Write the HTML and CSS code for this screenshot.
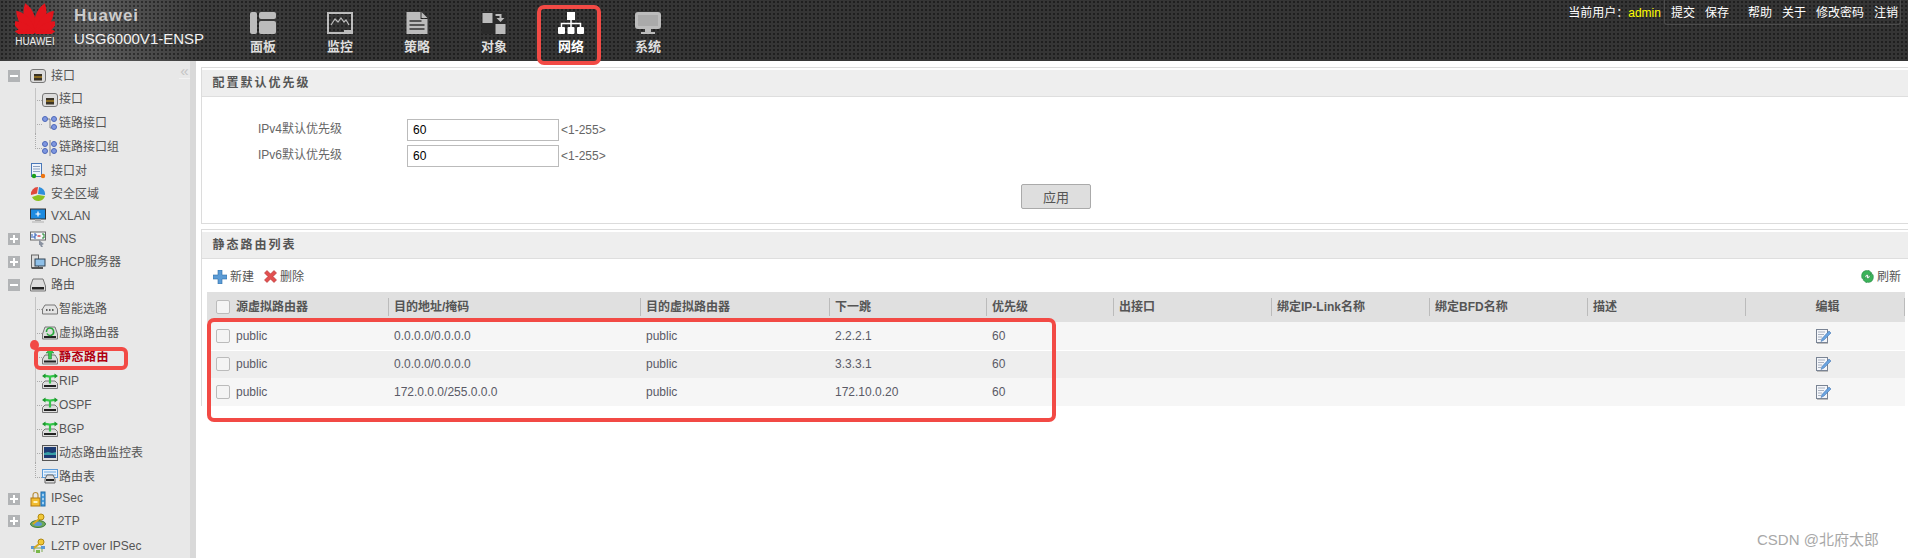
FILE: index.html
```html
<!DOCTYPE html>
<html lang="zh">
<head>
<meta charset="utf-8">
<title>USG6000V1-ENSP</title>
<link rel="stylesheet" href="styles.css">
</head>
<body>
<svg class="sprite" aria-hidden="true">
  <symbol id="petal" viewBox="-10 -32 20 32"><path d="M0 0C-9-7-10.500-20-4-31C4-24 5-9 0 0Z"/></symbol>
  <symbol id="n-panel" viewBox="0 0 26 22"><rect width="7" height="22" rx="2"/><rect x="9" width="17" height="7" rx="2"/><rect x="9" y="9" width="17" height="13" rx="2"/></symbol>
  <symbol id="n-monitor" viewBox="0 0 26 22"><path d="M0 0H26V22H0ZM2 2V20H17V18H24V2Z" fill-rule="evenodd"/><path d="M4 13L8 7 11 10 14 6 17 10 19 8 22 13" fill="none" stroke="currentColor" stroke-width="1.2"/></symbol>
  <symbol id="n-policy" viewBox="0 0 21 22"><path d="M0 0H14V7H21V22H0ZM15 0L21 6H15Z" fill-rule="evenodd"/><path d="M3 9H15M3 13H18M3 17H18" stroke="#333" stroke-width="1.6"/></symbol>
  <symbol id="n-object" viewBox="0 0 25 22"><rect width="25" height="22" fill="#2b2b2b"/><rect x="1" y="1" width="10" height="10"/><rect x="14" y="12" width="10" height="10"/><path d="M14 2H20V6H23L19 10 15 6H18V4H14Z"/></symbol>
  <symbol id="n-network" viewBox="0 0 26 22"><rect x="9" width="8" height="8"/><rect y="15" width="7" height="7" rx="1"/><rect x="9.500" y="15" width="7" height="7" rx="1"/><rect x="19" y="15" width="7" height="7" rx="1"/><path d="M13 8V15M3.500 15V11.500H22.500V15" fill="none" stroke="currentColor" stroke-width="1.500"/></symbol>
  <symbol id="n-system" viewBox="0 0 26 22"><rect width="26" height="17" rx="3"/><rect x="3" y="3" width="20" height="11" fill="#aaa"/><rect x="10" y="17" width="6" height="3"/><rect x="6" y="20" width="14" height="2"/></symbol>

  <symbol id="i-port" viewBox="0 0 16 16"><rect x=".5" y="1.500" width="15" height="13" rx="2.500" fill="#dcdcdc" stroke="#777"/><rect x="4" y="6" width="8" height="6.500" fill="#3a3326"/><path d="M5 8V10M7 8V10M9 8V10M11 8V10" stroke="#d9a520"/></symbol>
  <symbol id="i-link" viewBox="0 0 16 16"><path d="M4 3H8V12H12" fill="none" stroke="#888"/><circle cx="3" cy="3" r="2.500" fill="#7f97e0" stroke="#4d68b8"/><circle cx="12" cy="3" r="2.500" fill="#7f97e0" stroke="#4d68b8"/><circle cx="12" cy="11" r="2.500" fill="#7f97e0" stroke="#4d68b8"/></symbol>
  <symbol id="i-linkgroup" viewBox="0 0 16 16"><path d="M8 0V16" stroke="#888"/><circle cx="3" cy="4" r="2.500" fill="#7f97e0" stroke="#4d68b8"/><circle cx="12" cy="4" r="2.500" fill="#7f97e0" stroke="#4d68b8"/><circle cx="3" cy="11" r="2.500" fill="#7f97e0" stroke="#4d68b8"/><circle cx="12" cy="11" r="2.500" fill="#7f97e0" stroke="#4d68b8"/></symbol>
  <symbol id="i-pair" viewBox="0 0 16 16"><rect x="1.500" y=".5" width="10" height="13" fill="#eef3fb" stroke="#4a78b8"/><path d="M3 3.500H10M3 6H10M3 8.500H10" stroke="#8aa0c0"/><circle cx="4" cy="13" r="2.200" fill="#1aa01a"/><circle cx="13" cy="13" r="2.200" fill="#ee7410"/></symbol>
  <symbol id="i-zone" viewBox="0 0 16 16"><path d="M8 8L9 1A7 7 0 0 1 15 9Z" fill="#2f8fdc"/><path d="M7 7.500L8 1A7 7 0 0 0 1 9Z" fill="#e0483c"/><path d="M8 9L15 10A7 7 0 0 1 2 11Z" fill="#8cc21f"/></symbol>
  <symbol id="i-vxlan" viewBox="0 0 16 16"><rect x=".5" y="1" width="15" height="10" fill="#1d8be0" stroke="#333"/><path d="M8 3.500V8.500M5.500 6H10.500" stroke="#fff" stroke-width="1.200"/><rect x="5" y="11" width="6" height="2" fill="#aaa"/><rect x="2" y="13" width="12" height="2" fill="#ccc"/></symbol>
  <symbol id="i-dns" viewBox="0 0 16 16"><rect x=".5" y="1" width="15" height="8" fill="#f4f6fa" stroke="#666"/><path d="M2 3V7M4 3H6V5H4V7H6" stroke="#2b5bb8" fill="none"/><path d="M7.500 5H10.500" stroke="#c22" stroke-width="1.200"/><path d="M12 3H14V7H12" stroke="#1a8a2a" fill="none"/><path d="M9 9L14 13 12 14 13 16H11L10 14 9 14Z" fill="#8a92a0"/></symbol>
  <symbol id="i-dhcp" viewBox="0 0 16 16"><rect x="1.500" y="1" width="7" height="13" fill="#ddd" stroke="#666"/><rect x="5" y="5" width="10" height="7" fill="#8fc0e8" stroke="#345"/><rect x="2" y="13" width="11" height="2" fill="#555"/></symbol>
  <symbol id="i-route" viewBox="0 0 16 16"><path d="M3 2H13L15.500 9V14H.5V9Z" fill="#ddd" stroke="#777"/><rect x="2" y="10" width="12" height="2.500" fill="#222"/></symbol>
  <symbol id="i-smart" viewBox="0 0 16 16"><path d="M3 4H13L15.500 8V13H.5V8Z" fill="#e4e4e4" stroke="#777"/><path d="M4 9H5.500M7 9H8.500M10 9H11.500" stroke="#333" stroke-width="1.600"/></symbol>
  <symbol id="i-vr" viewBox="0 0 16 16"><path d="M3 2H13L15.500 9V14H.5V9Z" fill="#ddd" stroke="#777"/><rect x="2" y="11" width="12" height="2" fill="#222"/><path d="M4.500 7A3.500 3.500 0 0 1 11.500 6M11.500 6A3.500 3.500 0 0 1 5 8.500" fill="none" stroke="#2aa83c" stroke-width="1.600"/></symbol>
  <symbol id="i-static" viewBox="0 0 16 16"><path d="M3 6H13L15.500 10V15H.5V10Z" fill="#ddd" stroke="#777"/><rect x="2" y="11.500" width="12" height="2" fill="#222"/><path d="M8 0L12 4H9.500V10H6.500V4H4Z" fill="#35c54a" stroke="#1c7a2a" stroke-width=".5"/></symbol>
  <symbol id="i-dyn" viewBox="0 0 16 16"><path d="M3 8H13L15.500 10.500V15.500H.5V10.500Z" fill="#ddd" stroke="#777"/><rect x="2" y="12" width="12" height="2" fill="#222"/><path d="M8 10.500V3M8 3.500C5 3.500 4 2.500 2 3M8 3.500C11 3.500 12 2.500 14 3" fill="none" stroke="#35c54a" stroke-width="2.200"/><path d="M0 3L3.500 .5V5.500ZM16 3L12.500 .5V5.500Z" fill="#1c9a2e"/></symbol>
  <symbol id="i-mon" viewBox="0 0 16 16"><rect x=".5" y=".5" width="15" height="15" fill="#ddd" stroke="#555"/><rect x="2" y="2" width="12" height="11" fill="#1c3a72"/><path d="M2 8L6 7 10 8 14 7V10H2Z" fill="#38a0a8"/></symbol>
  <symbol id="i-table" viewBox="0 0 16 16"><rect x=".5" y=".5" width="15" height="8" fill="#e8f2fc" stroke="#5a9ad8"/><path d="M2 3H14M2 6H14" stroke="#6aa8e0"/><path d="M5 6H11L13 10V14H3V10Z" fill="#ddd" stroke="#666"/><rect x="4" y="10" width="8" height="2" fill="#222"/></symbol>
  <symbol id="i-ipsec" viewBox="0 0 16 16"><path d="M3 7V4A2.500 2.500 0 0 1 8 4V7" fill="none" stroke="#b89040" stroke-width="1.200"/><rect x="1" y="7" width="9" height="8" fill="#f2bc30" stroke="#b07810"/><rect x="3.500" y="10" width="4" height="2" fill="#fff3c0"/><rect x="11" y="1" width="4" height="14" fill="#4aa0e0" stroke="#1e6aa8"/><path d="M13 3V5M13 7V9M13 11V13" stroke="#fff"/></symbol>
  <symbol id="i-l2tp" viewBox="0 0 16 16"><ellipse cx="8" cy="11" rx="7.500" ry="3.500" fill="#6fa85a" stroke="#3a7a40"/><ellipse cx="8" cy="11" rx="4" ry="2" fill="#5a98d8"/><circle cx="11" cy="4" r="3" fill="#f2c838" stroke="#b08810"/><path d="M9 6L3 11" stroke="#d8a820" stroke-width="2"/></symbol>
  <symbol id="i-l2tpo" viewBox="0 0 16 16"><path d="M2 10H14M4 10V14M12 10V14" stroke="#7aa84a"/><rect x="1" y="8" width="4" height="3" fill="#5a98d8"/><rect x="11" y="8" width="4" height="3" fill="#5a98d8"/><rect x="6" y="12" width="4" height="3" fill="#7ab84a"/><circle cx="11" cy="4" r="3" fill="#f2c838" stroke="#b08810"/><path d="M9 6L4 10" stroke="#d8a820" stroke-width="2"/></symbol>

  <symbol id="t-plus" viewBox="0 0 14 14"><path d="M5 0H9V5H14V9H9V14H5V9H0V5H5Z" fill="#5b9bd5" stroke="#2f6ea8" stroke-width=".6"/></symbol>
  <symbol id="t-del" viewBox="0 0 13 13"><path d="M.5 3L3 .5 6.500 4 10 .5 12.500 3 9 6.500 12.500 10 10 12.500 6.500 9 3 12.500 .5 10 4 6.500Z" fill="#e25050" stroke="#b03030" stroke-width=".6"/></symbol>
  <symbol id="t-refresh" viewBox="0 0 14 14"><path d="M1 9C-.5 3 3.500-.5 8 1V0L12 3.500 8 7V5C5 4.500 4 6.500 4 10Z" fill="#3cb35a" stroke="#1c7a3a" stroke-width=".5"/><path d="M13 5C14.500 11 10.500 14.500 6 13V14L2 10.500 6 7V9C9 9.500 10 7.500 10 4Z" fill="#3cb35a" stroke="#1c7a3a" stroke-width=".5"/></symbol>
  <symbol id="t-edit" viewBox="0 0 15 15"><rect x=".5" y=".5" width="11" height="13" fill="#f4f6fa" stroke="#7a8494"/><path d="M2 3H9M2 5.500H8M2 8H6M2 10.500H5" stroke="#aab2c0"/><path d="M13 2L15 4 8 11 5 12.500 6 9.500Z" fill="#6aa4e0" stroke="#3a6aa8" stroke-width=".5"/><path d="M1 14.500H12" stroke="#bbb"/></symbol>
</svg>

<div class="app">
  <header class="header">
    <div class="brand">
      <svg class="flower" viewBox="-20 -31 40 32" aria-hidden="true">
        <use href="#petal" x="-10" y="-32" width="20" height="32" transform="rotate(-11)"/>
        <use href="#petal" x="-10" y="-32" width="20" height="32" transform="rotate(11) scale(-1 1)"/>
        <use href="#petal" x="-10" y="-32" width="20" height="32" transform="rotate(-33) scale(.93)"/>
        <use href="#petal" x="-10" y="-32" width="20" height="32" transform="rotate(33) scale(-.93 .93)"/>
        <use href="#petal" x="-10" y="-32" width="20" height="32" transform="rotate(-56) scale(.8)"/>
        <use href="#petal" x="-10" y="-32" width="20" height="32" transform="rotate(56) scale(-.8 .8)"/>
        <use href="#petal" x="-10" y="-32" width="20" height="32" transform="rotate(-78) scale(.65)"/>
        <use href="#petal" x="-10" y="-32" width="20" height="32" transform="rotate(78) scale(-.65 .65)"/>
      </svg>
      <span class="brand-word">HUAWEI</span>
    </div>
    <div class="device">
      <div class="device-vendor">Huawei</div>
      <div class="device-model">USG6000V1-ENSP</div>
    </div>
    <nav class="nav">
      <a class="nav-item"><svg class="nav-icon"><use href="#n-panel"/></svg><span>面板</span></a>
      <a class="nav-item"><svg class="nav-icon"><use href="#n-monitor"/></svg><span>监控</span></a>
      <a class="nav-item"><svg class="nav-icon"><use href="#n-policy"/></svg><span>策略</span></a>
      <a class="nav-item"><svg class="nav-icon"><use href="#n-object"/></svg><span>对象</span></a>
      <a class="nav-item nav-item-active"><svg class="nav-icon"><use href="#n-network"/></svg><span>网络</span></a>
      <a class="nav-item"><svg class="nav-icon"><use href="#n-system"/></svg><span>系统</span></a>
    </nav>
    <div class="account">
      <span class="account-user">当前用户：<b class="account-name">admin</b></span>
      <div class="account-links">
        <a>提交</a><a>保存</a><a class="link-gap">帮助</a><a>关于</a><a>修改密码</a><a>注销</a>
      </div>
    </div>
  </header>

  <div class="workspace">
    <aside class="sidebar">
      <span class="collapse">«</span>
      <div class="row"><span class="exp minus"></span><svg class="ico"><use href="#i-port"/></svg><span>接口</span></div>
      <div class="kids">
        <div class="kid"><svg class="ico"><use href="#i-port"/></svg><span>接口</span></div>
        <div class="kid"><svg class="ico"><use href="#i-link"/></svg><span>链路接口</span></div>
        <div class="kid"><svg class="ico"><use href="#i-linkgroup"/></svg><span>链路接口组</span></div>
      </div>
      <div class="row"><span class="exp blank"></span><svg class="ico"><use href="#i-pair"/></svg><span>接口对</span></div>
      <div class="row"><span class="exp blank"></span><svg class="ico"><use href="#i-zone"/></svg><span>安全区域</span></div>
      <div class="row"><span class="exp blank"></span><svg class="ico"><use href="#i-vxlan"/></svg><span>VXLAN</span></div>
      <div class="row"><span class="exp plus"></span><svg class="ico"><use href="#i-dns"/></svg><span>DNS</span></div>
      <div class="row"><span class="exp plus"></span><svg class="ico"><use href="#i-dhcp"/></svg><span>DHCP服务器</span></div>
      <div class="row"><span class="exp minus"></span><svg class="ico"><use href="#i-route"/></svg><span>路由</span></div>
      <div class="kids kids-route">
        <div class="kid"><svg class="ico"><use href="#i-smart"/></svg><span>智能选路</span></div>
        <div class="kid"><svg class="ico"><use href="#i-vr"/></svg><span>虚拟路由器</span></div>
        <div class="kid kid-selected"><svg class="ico"><use href="#i-static"/></svg><span>静态路由</span></div>
        <div class="kid"><svg class="ico"><use href="#i-dyn"/></svg><span>RIP</span></div>
        <div class="kid"><svg class="ico"><use href="#i-dyn"/></svg><span>OSPF</span></div>
        <div class="kid"><svg class="ico"><use href="#i-dyn"/></svg><span>BGP</span></div>
        <div class="kid"><svg class="ico"><use href="#i-mon"/></svg><span>动态路由监控表</span></div>
        <div class="kid"><svg class="ico"><use href="#i-table"/></svg><span>路由表</span></div>
      </div>
      <div class="row"><span class="exp plus"></span><svg class="ico"><use href="#i-ipsec"/></svg><span>IPSec</span></div>
      <div class="row"><span class="exp plus"></span><svg class="ico"><use href="#i-l2tp"/></svg><span>L2TP</span></div>
      <div class="row row-last"><span class="exp blank"></span><svg class="ico"><use href="#i-l2tpo"/></svg><span>L2TP over IPSec</span></div>
    </aside>

    <main class="main">
      <section class="panel">
        <h2 class="panel-title">配置默认优先级</h2>
        <div class="form">
          <label class="form-label">IPv4默认优先级</label>
          <input class="form-input" value="60">
          <span class="form-hint">&lt;1-255&gt;</span>
          <label class="form-label">IPv6默认优先级</label>
          <input class="form-input" value="60">
          <span class="form-hint">&lt;1-255&gt;</span>
        </div>
        <div class="form-actions"><button class="apply">应用</button></div>
      </section>

      <section class="panel panel-list">
        <h2 class="panel-title">静态路由列表</h2>
        <div class="toolbar">
          <a class="tool"><svg class="tool-plus"><use href="#t-plus"/></svg>新建</a>
          <a class="tool tool-del"><svg class="tool-x"><use href="#t-del"/></svg>删除</a>
          <a class="tool tool-refresh"><svg class="tool-x"><use href="#t-refresh"/></svg>刷新</a>
        </div>
        <table class="routes">
          <colgroup>
            <col class="c-src"><col class="c-dst"><col class="c-vr"><col class="c-hop"><col class="c-pri">
            <col class="c-std"><col class="c-std"><col class="c-std"><col class="c-std"><col class="c-end">
          </colgroup>
          <thead>
            <tr>
              <th><div class="th-in th-check"><input type="checkbox" class="check">源虚拟路由器</div></th>
              <th><div class="th-in">目的地址/掩码</div></th>
              <th><div class="th-in">目的虚拟路由器</div></th>
              <th><div class="th-in">下一跳</div></th>
              <th><div class="th-in">优先级</div></th>
              <th><div class="th-in">出接口</div></th>
              <th><div class="th-in">绑定IP-Link名称</div></th>
              <th><div class="th-in">绑定BFD名称</div></th>
              <th><div class="th-in">描述</div></th>
              <th><div class="th-in th-center">编辑</div></th>
            </tr>
          </thead>
          <tbody>
            <tr>
              <td class="td-check"><input type="checkbox" class="check">public</td><td>0.0.0.0/0.0.0.0</td><td>public</td><td>2.2.2.1</td><td>60</td><td></td><td></td><td></td><td></td>
              <td class="td-edit"><svg class="edit"><use href="#t-edit"/></svg></td>
            </tr>
            <tr>
              <td class="td-check"><input type="checkbox" class="check">public</td><td>0.0.0.0/0.0.0.0</td><td>public</td><td>3.3.3.1</td><td>60</td><td></td><td></td><td></td><td></td>
              <td class="td-edit"><svg class="edit"><use href="#t-edit"/></svg></td>
            </tr>
            <tr>
              <td class="td-check"><input type="checkbox" class="check">public</td><td>172.0.0.0/255.0.0.0</td><td>public</td><td>172.10.0.20</td><td>60</td><td></td><td></td><td></td><td></td>
              <td class="td-edit"><svg class="edit"><use href="#t-edit"/></svg></td>
            </tr>
          </tbody>
        </table>
      </section>
    </main>
  </div>

  <div class="mark mark-nav"></div>
  <div class="mark mark-route"></div>
  <div class="mark-dot"></div>
  <div class="mark mark-table"></div>
  <div class="watermark">CSDN @北府太郎</div>
</div>
</body>
</html>
```

FILE: styles.css
```css
* { box-sizing: border-box; }

html, body {
  margin: 0;
  height: 100%;
}

body {
  background: #fff;
  color: #555;
  font: 12px/1.2 "Liberation Sans", "Noto Sans CJK SC", sans-serif;
  overflow: hidden;
}

.sprite {
  position: absolute;
  width: 0;
  height: 0;
}

.app {
  position: relative;
  width: 1908px;
  height: 558px;
  overflow: hidden;
}

/* header */
.header {
  display: flex;
  height: 61px;
  padding-left: 15px;
  background-color: #333;
  background-image:
    radial-gradient(circle at 2px 2px, rgba(0, 0, 0, .42) 1px, transparent 1.5px),
    linear-gradient(90deg, #3a3a3a 0, #5c5c5c 90px, #3c3c3c 200px, #353535 400px);
  background-size: 4px 4px, 100% 100%;
  color: #fff;
}

.brand {
  display: flex;
  flex-direction: column;
  align-items: center;
  width: 40px;
  margin-right: 19px;
  padding-top: 2px;
}

.flower {
  display: block;
  width: 40px;
  height: 32px;
  fill: #e3141c;
}

.brand-word {
  margin-top: 3px;
  font-size: 10px;
  line-height: 10px;
  color: #eee;
}

.device {
  width: 150px;
  padding-top: 6px;
}

.device-vendor {
  font-size: 17px;
  font-weight: bold;
  line-height: 20px;
  letter-spacing: .9px;
  color: #ccc;
}

.device-model {
  margin-top: 3px;
  font-size: 15px;
  line-height: 19px;
  color: #f2f2f2;
}

.nav {
  display: flex;
  margin-left: .5px;
}

.nav-item {
  display: flex;
  flex-direction: column;
  align-items: center;
  width: 77px;
  padding-top: 12px;
  color: #bcbcbc;
  font-size: 13px;
  font-weight: bold;
  line-height: 16px;
}

.nav-item span {
  margin-top: 5px;
  color: #ddd;
}

.nav-item-active { color: #fff; }
.nav-item-active span { color: #fff; }

.nav-icon {
  display: block;
  width: 26px;
  height: 22px;
  fill: currentColor;
}

.account {
  display: flex;
  align-items: flex-start;
  margin-left: auto;
  margin-right: 7px;
  color: #fff;
  line-height: 26px;
}

.account-name {
  margin-right: 3px;
  color: #ff0;
  font-weight: normal;
}

.account-links {
  display: flex;
  gap: 10px;
  height: 25px;
  padding: 0 2px 0 6px;
  border: 1px solid #4c4c4c;
  border-top: 0;
  border-radius: 0 0 3px 3px;
}

.link-gap { margin-left: 9px; }

/* layout */
.workspace {
  display: flex;
  height: 497px;
}

.sidebar {
  position: relative;
  flex: none;
  width: 196px;
  padding-top: 3.5px;
  background: #e8e8e8;
  border-right: 6px solid #d9d9d9;
  overflow: hidden;
}

.collapse {
  position: absolute;
  top: 3px;
  right: 0;
  width: 11px;
  color: #c4c4c4;
  font-size: 15px;
  line-height: 14px;
  text-align: center;
  border-bottom: 1px solid #f2f2f2;
}

/* tree */
.row {
  display: flex;
  align-items: center;
  height: 22.8px;
  white-space: nowrap;
}

.row:first-of-type { height: 23px; }
.row-last { margin-top: 1.5px; }

.exp {
  position: relative;
  flex: none;
  width: 12px;
  height: 12px;
  margin: 0 10px 0 8px;
  background: #b2b4b6;
}

.exp.blank { background: none; }

.exp.minus::before,
.exp.plus::before,
.exp.plus::after {
  content: "";
  position: absolute;
  background: #fff;
}

.exp.minus::before,
.exp.plus::before {
  left: 2px;
  top: 5px;
  width: 8px;
  height: 2px;
}

.exp.plus::after {
  left: 5px;
  top: 2px;
  width: 2px;
  height: 8px;
}

.ico {
  flex: none;
  display: block;
  width: 16px;
  height: 16px;
}

.row .ico { margin-right: 5px; }

.kids {
  position: relative;
}

.kids::before {
  content: "";
  position: absolute;
  left: 35px;
  top: 0;
  bottom: 27px;
  width: 1px;
  background: #c4c4c4;
}

.kids::after {
  content: "";
  position: absolute;
  left: 35px;
  bottom: 11px;
  height: 16px;
  border-left: 1px dotted #aaa;
}

.kids-route {
  margin-top: 1px;
  margin-bottom: -2px;
}

.kid {
  position: relative;
  display: flex;
  align-items: center;
  gap: 1px;
  height: 24px;
  padding-left: 42px;
  white-space: nowrap;
}

.kid::before {
  content: "";
  position: absolute;
  left: 37px;
  top: 12px;
  width: 5px;
  border-top: 1px dotted #aaa;
}

.kid-selected span {
  color: #b00010;
  font-weight: bold;
  letter-spacing: .5px;
}

/* main */
.main {
  flex: 1;
  min-width: 0;
  padding: 6px 0 0 5px;
}

.panel {
  padding-top: 2px;
  border: 1px solid #dcdcdc;
  border-right: 0;
}

.panel-list {
  margin-top: 5px;
  border-bottom: 0;
}

.panel-title {
  height: 27px;
  margin: 0;
  padding-left: 10.5px;
  background: #eee;
  border-bottom: 1px solid #dedede;
  color: #555;
  font-size: 12px;
  font-weight: bold;
  line-height: 26px;
  letter-spacing: 2px;
}

.form {
  display: grid;
  grid-template-columns: 149px 152px auto;
  grid-auto-rows: 22px;
  row-gap: 4px;
  justify-content: start;
  align-items: center;
  padding: 22px 0 0 56px;
}

.form-label {
  margin-top: -2px;
  color: #666;
}

.form-input {
  width: 152px;
  height: 22px;
  padding: 0 5px;
  border: 1px solid #bbb;
  background: #fff;
  color: #000;
  font: 12px "Liberation Sans", sans-serif;
}

.form-hint {
  margin-left: 2px;
  color: #666;
}

.form-actions {
  display: flex;
  justify-content: center;
  padding: 17px 0 14px 2px;
}

.apply {
  width: 70px;
  height: 25px;
  padding: 0;
  border: 1px solid #aaa;
  border-radius: 2px;
  background: #dedede;
  color: #555;
  font: 13px "Liberation Sans", "Noto Sans CJK SC", sans-serif;
}

.toolbar {
  display: flex;
  align-items: center;
  height: 33px;
  padding: 3px 7px 0 11px;
}

.tool {
  display: flex;
  align-items: center;
  gap: 3px;
  color: #555;
}

.tool-del { margin-left: 10px; }
.tool-refresh { margin-left: auto; }

.tool-plus {
  display: block;
  width: 14px;
  height: 14px;
}

.tool-x {
  display: block;
  width: 13px;
  height: 13px;
}

/* table */
.routes {
  width: 1698px;
  margin-left: 5px;
  table-layout: fixed;
  border-collapse: separate;
  border-spacing: 0;
}

.c-src { width: 182px; }
.c-dst { width: 252px; }
.c-vr { width: 189px; }
.c-hop { width: 157px; }
.c-pri { width: 127px; }
.c-std { width: 158px; }
.c-end { width: 159px; }

.routes th {
  height: 30px;
  padding: 0;
  background: #e0e0e0;
  font-weight: bold;
  text-align: left;
  color: #555;
}

.th-in {
  display: flex;
  align-items: center;
  height: 18px;
  margin-top: 0;
  padding-left: 5px;
  border-right: 1px solid #bbb;
}

.th-check { padding-left: 9px; }
.th-center { justify-content: center; }

.routes td {
  height: 28px;
  padding: 0 0 0 5px;
  color: #5a5a66;
  white-space: nowrap;
}

.routes tbody tr:nth-child(odd) td { background: #f6f6f6; }
.routes tbody tr:nth-child(even) td {
  background: #eee;
  border-top: 1px solid #fff;
}

.routes .td-check {
  padding-left: 9px;
}

.check {
  appearance: none;
  display: inline-block;
  flex: none;
  width: 14px;
  height: 14px;
  margin: 0 6px 0 0;
  vertical-align: -3px;
  border: 1px solid #bbb;
  border-radius: 2px;
  background: #f4f4f4;
}

.routes .td-edit {
  padding: 0 4px 0 0;
  text-align: center;
}

.edit {
  display: inline-block;
  width: 15px;
  height: 15px;
  vertical-align: middle;
}

/* annotations drawn on top of the screenshot */
.mark {
  position: absolute;
  border: 4px solid #f24a45;
  pointer-events: none;
}

.mark-nav {
  left: 537px;
  top: 5px;
  width: 64px;
  height: 60px;
  border-radius: 7px;
}

.mark-route {
  left: 34px;
  top: 347px;
  width: 94px;
  height: 23px;
  border-radius: 6px;
}

.mark-dot {
  position: absolute;
  left: 30px;
  top: 340px;
  width: 9px;
  height: 10px;
  border-radius: 50%;
  background: #f24a45;
}

.mark-table {
  left: 207px;
  top: 318px;
  width: 849px;
  height: 104px;
  border-radius: 7px;
}

.watermark {
  position: absolute;
  left: 1757px;
  top: 531px;
  color: #a8a8a8;
  font-size: 15px;
  line-height: 18px;
  white-space: nowrap;
}
```
